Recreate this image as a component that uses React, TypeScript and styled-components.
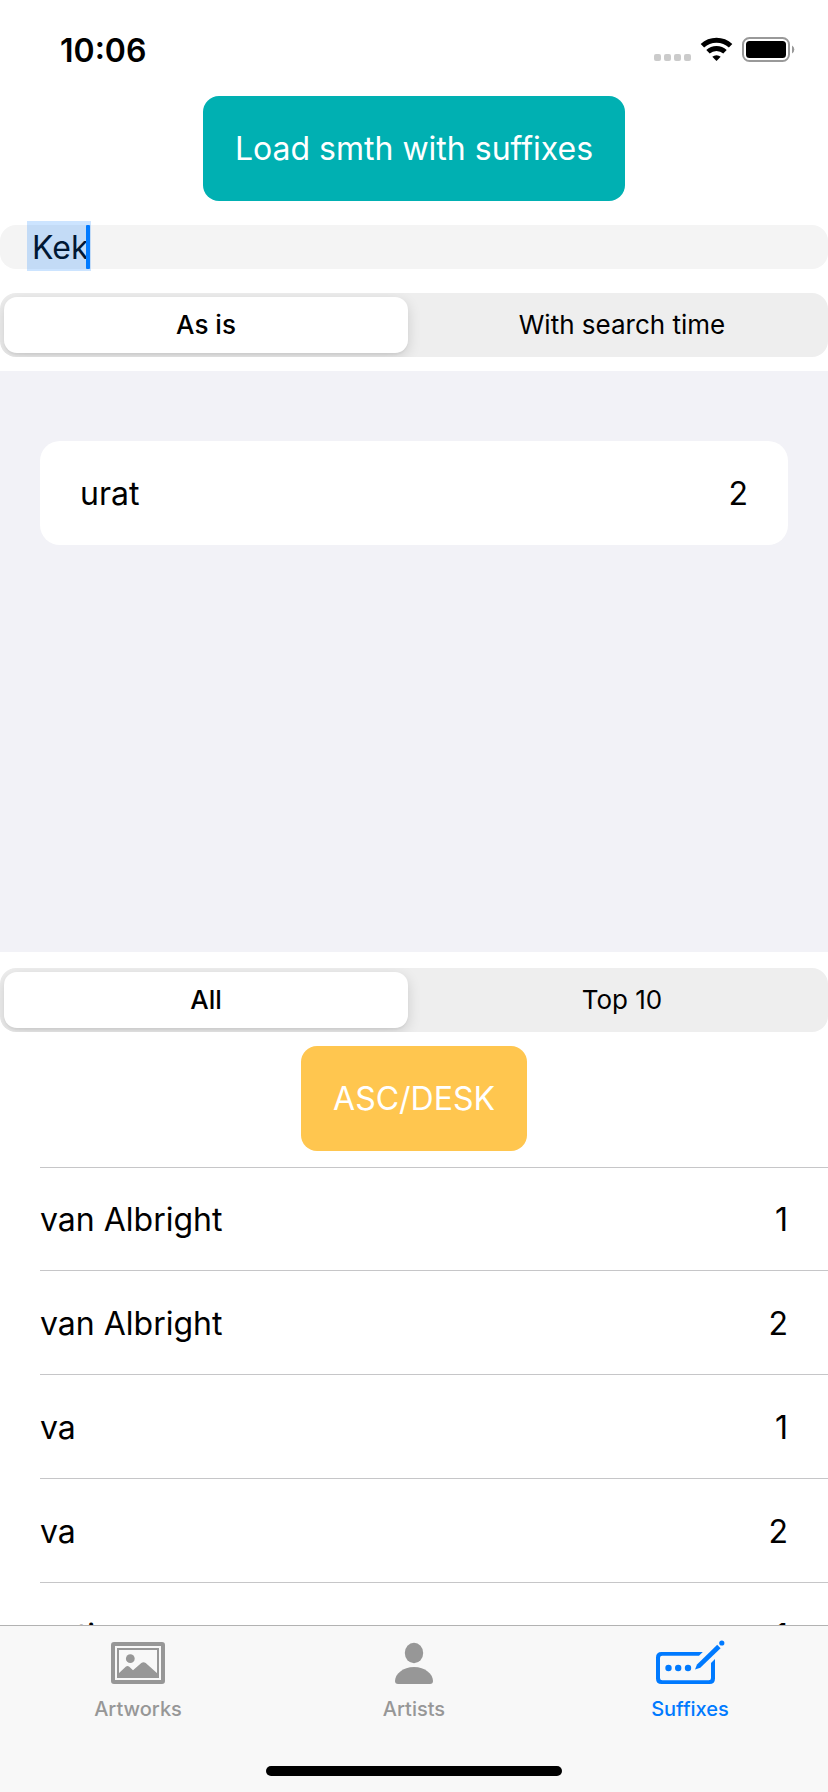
import React, { useState } from "react";
import styled, { createGlobalStyle } from "styled-components";

const GlobalStyle = createGlobalStyle`
  *, *::before, *::after { box-sizing: border-box; }
  body { margin: 0; background: #fff; }
  button, input { font: inherit; color: inherit; border: 0; }
`;

const Screen = styled.div`
  display: flex;
  flex-direction: column;
  height: 100vh;
  background: #fff;
  color: #000;
  font-family: Inter, "Liberation Sans", sans-serif;
  font-size: 32px;
  line-height: 40px;
  overflow: hidden;
`;

const StatusBar = styled.header`
  display: flex;
  align-items: center;
  justify-content: space-between;
  height: 96px;
  flex: none;
  padding: 4px 33px 0 60px;
`;

const Clock = styled.time`
  padding-top: 2px;
  font-weight: 600;
`;

const ActionButton = styled.button<{ $color: string }>`
  flex: none;
  align-self: center;
  height: 105px;
  padding: 0 32px;
  border-radius: 16px;
  background: ${(p) => p.$color};
  color: #fff;
`;

const Field = styled.label`
  position: relative;
  display: flex;
  flex: none;
  height: 44px;
  margin: 24px 0;
`;

const FieldInput = styled.input`
  width: 100%;
  padding: 2px 32px 0;
  border-radius: 16px;
  background: #f4f4f4;
  outline: none;
`;

const Selection = styled.span`
  position: absolute;
  left: 27px;
  top: -4px;
  width: 64px;
  height: 50px;
  background: rgba(0, 122, 255, 0.2);
`;

const Caret = styled.span`
  position: absolute;
  left: 86px;
  top: 0;
  width: 4px;
  height: 44px;
  border-radius: 1px;
  background: #007aff;
`;

const SegmentTrack = styled.div`
  display: grid;
  grid-template-columns: 1fr 1fr;
  gap: 12px;
  flex: none;
  height: 64px;
  padding: 4px;
  border-radius: 16px;
  background: #eee;
  overflow: hidden;
`;

const SegmentButton = styled.button<{ $selected: boolean }>`
  padding: 0;
  border-radius: 13px;
  font-size: 26px;
  font-weight: ${(p) => (p.$selected ? 500 : 400)};
  background: ${(p) => (p.$selected ? "#fff" : "transparent")};
  box-shadow: ${(p) => (p.$selected ? "0 4px 14px rgba(0, 0, 0, 0.14), 0 2px 2px rgba(0, 0, 0, 0.04)" : "none")};
`;

const GroupedPanel = styled.section`
  flex: 1 1 123px;
  min-height: 0;
  margin: 14px 0 16px;
  padding: 70px 40px 0;
  background: #f2f2f7;
  overflow: hidden;
`;

const Card = styled.div`
  display: flex;
  align-items: center;
  justify-content: space-between;
  height: 104px;
  padding: 2px 40px 0;
  border-radius: 20px;
  background: #fff;
`;

const ResultList = styled.ul`
  flex: 1 1 0;
  min-height: 0;
  margin: 16px 0 0;
  padding: 0 0 0 40px;
  list-style: none;
  overflow: hidden;
`;

const ResultRow = styled.li`
  display: flex;
  align-items: center;
  justify-content: space-between;
  height: 104px;
  padding: 2px 40px 0 0;
  border-bottom: 1px solid #c6c6c8;
  &:first-child { border-top: 1px solid #c6c6c8; }
`;

const SortArea = styled.div`
  display: flex;
  justify-content: center;
  flex: none;
  padding-top: 14px;
`;

const TabBar = styled.nav`
  display: grid;
  grid-template-columns: repeat(3, 1fr);
  flex: none;
  height: 124px;
  padding-top: 12px;
  align-items: start;
`;

const BottomArea = styled.footer`
  display: flex;
  flex-direction: column;
  flex: none;
  border-top: 1px solid #b2b2b2;
  background: #f8f8f8;
`;

const Tab = styled.a<{ $active?: boolean }>`
  display: flex;
  flex-direction: column;
  align-items: center;
  gap: 13px;
  color: ${(p) => (p.$active ? "#007aff" : "#979797")};
  font-size: 20px;
  font-weight: 500;
  line-height: 24px;
  text-decoration: none;
  svg { display: block; }
`;

const HomeIndicator = styled.div`
  align-self: center;
  width: 296px;
  height: 10px;
  margin: 16px 0;
  border-radius: 5px;
  background: #000;
`;

const StatusIcons = () => (
  <svg width="142" height="26" viewBox="0 0 142 26" aria-hidden="true">
    <g fill="#cbcbcb">
      <rect x="1" y="17" width="7" height="7" rx="2" />
      <rect x="11" y="17" width="7" height="7" rx="2" />
      <rect x="21" y="17" width="7" height="7" rx="2" />
      <rect x="31" y="17" width="7" height="7" rx="2" />
    </g>
    <g fill="none" stroke="#000" strokeWidth="5">
      <path d="M49.4 8.8a20.5 20.5 0 0 1 28.2 0" />
      <path d="M55 14.8a12.4 12.4 0 0 1 17 0" />
    </g>
    <path d="M63.5 24l-4.2-4.2a6.2 6.2 0 0 1 8.4 0z" />
    <rect x="90" y="1" width="46" height="23" rx="6.5" fill="none" stroke="#999" strokeWidth="2" />
    <rect x="93" y="4" width="40" height="17" rx="3.5" />
    <path d="M139 8.5a4.6 4.6 0 0 1 0 8z" fill="#999" />
  </svg>
);

const ArtworkIcon = () => (
  <svg width="54" height="46" viewBox="0 0 54 46" aria-hidden="true" fill="currentColor">
    <rect x="2" y="6" width="50" height="38" rx="1" fill="none" stroke="currentColor" strokeWidth="4" />
    <rect x="7" y="11" width="40" height="28" fill="none" stroke="currentColor" strokeWidth="2" />
    <circle cx="19.3" cy="20.7" r="4.4" />
    <path d="M7 36l8-7.4q1.6-1 3 0l4 3.6 8.300-7.2q2.200-1.700 4.400 0L47 36v3.500H7z" />
  </svg>
);

const PersonIcon = () => (
  <svg width="40" height="46" viewBox="0 0 40 46" aria-hidden="true" fill="currentColor">
    <ellipse cx="20" cy="15" rx="9.200" ry="10.200" />
    <path d="M4 46q-3 0-3-3C1 36 9 29 20 29s19 7 19 14q0 3-3 3z" />
  </svg>
);

const SuffixIcon = () => (
  <svg width="70" height="46" viewBox="0 0 70 46" aria-hidden="true" fill="currentColor">
    <path d="M47.800 14H6.500Q1 14 1 19.500v21Q1 46 6.500 46h48q5.500 0 5.500-5.500V21l-4 4v15q0 2.200-2.200 2.200H7.200Q5 42.200 5 40V20q0-2.200 2.200-2.200H44z" />
    <circle cx="13.500" cy="30" r="3.200" />
    <circle cx="23.200" cy="30" r="3.200" />
    <circle cx="33" cy="30" r="3.200" />
    <path d="M62.200 6.800l3.400 3.400-20.300 19.600-5.300 1.700 2-5z" />
    <circle cx="66.800" cy="5" r="2.600" />
  </svg>
);

function Segmented({ label, options }: { label: string; options: string[] }) {
  const [selected, setSelected] = useState(0);
  return (
    <SegmentTrack role="group" aria-label={label}>
      {options.map((option, i) => (
        <SegmentButton
          key={option}
          type="button"
          $selected={i === selected}
          aria-pressed={i === selected}
          onClick={() => setSelected(i)}
        >
          {option}
        </SegmentButton>
      ))}
    </SegmentTrack>
  );
}

const results: [string, number][] = [
  ["van Albright", 1],
  ["van Albright", 2],
  ["va", 1],
  ["va", 2],
  ["anti", 1],
];

export default function App() {
  const [query, setQuery] = useState("Kek");
  return (
    <>
      <GlobalStyle />
      <Screen>
        <StatusBar>
          <Clock>10:06</Clock>
          <StatusIcons />
        </StatusBar>
        <ActionButton type="button" $color="#00b0b2">Load smth with suffixes</ActionButton>
        <Field>
          <FieldInput aria-label="Search" value={query} onChange={(e) => setQuery(e.target.value)} />
          {query === "Kek" && (
            <>
              <Selection />
              <Caret />
            </>
          )}
        </Field>
        <Segmented label="Display" options={["As is", "With search time"]} />
        <GroupedPanel>
          <Card>
            <span>urat</span>
            <span>2</span>
          </Card>
        </GroupedPanel>
        <Segmented label="Range" options={["All", "Top 10"]} />
        <SortArea>
          <ActionButton type="button" $color="#ffc64f">ASC/DESK</ActionButton>
        </SortArea>
        <ResultList>
          {results.map(([text, count], i) => (
            <ResultRow key={i}>
              <span>{text}</span>
              <span>{count}</span>
            </ResultRow>
          ))}
        </ResultList>
        <BottomArea>
          <TabBar>
            <Tab href="#artworks"><ArtworkIcon />Artworks</Tab>
            <Tab href="#artists"><PersonIcon />Artists</Tab>
            <Tab href="#suffixes" $active aria-current="page"><SuffixIcon />Suffixes</Tab>
          </TabBar>
          <HomeIndicator />
        </BottomArea>
      </Screen>
    </>
  );
}
